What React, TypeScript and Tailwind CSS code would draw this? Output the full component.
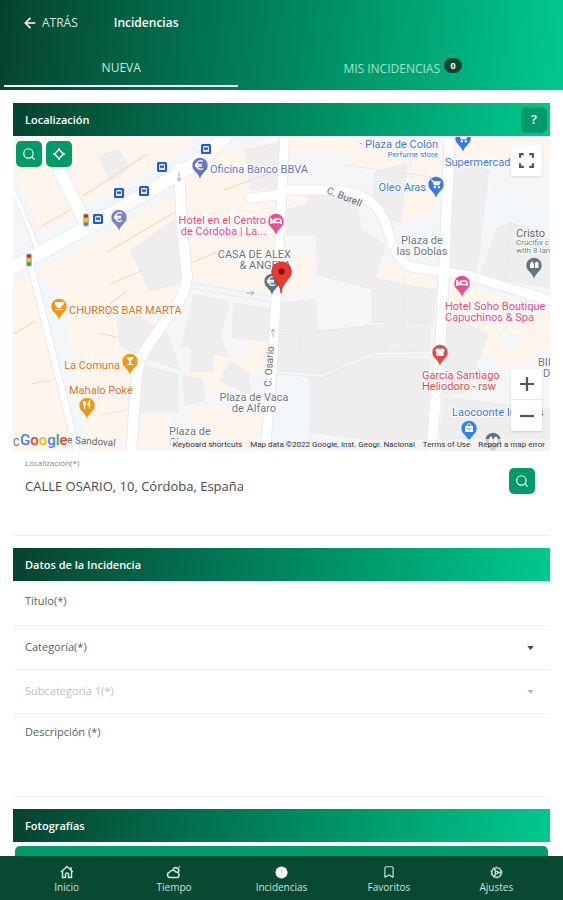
import type { ReactNode } from "react";
import { LuBookmark, LuSearch, LuArrowLeft } from "react-icons/lu";

const BAR = "bg-[linear-gradient(97deg,#06432f_0%,#00855d_50%,#00c98d_100%)]";

function SectionBar({ title, action }: { title: string; action?: ReactNode }) {
  return (
    <div className={`flex h-[33px] items-center justify-between pr-[3px] pl-3 ${BAR}`}>
      <h2 className="pt-[2px] text-[11px] font-semibold text-white">{title}</h2>
      {action}
    </div>
  );
}

function GreenButton({ label, children }: { label: string; children: ReactNode }) {
  return (
    <button
      type="button"
      aria-label={label}
      className="flex size-[26px] shrink-0 items-center justify-center rounded-[5px] bg-[#039a6a] text-white"
    >
      {children}
    </button>
  );
}

type PinKind = "cup" | "glass" | "fork" | "bed" | "cart" | "bag" | "coin" | "shirt" | "arch";

function Pin({ x, y, color, kind }: { x: number; y: number; color: string; kind: PinKind }) {
  return (
    <g transform={`translate(${x} ${y})`}>
      <path
        d="M0 14.500C-1.200 11-2.600 9-4.800 6.800A8 8 0 1 1 4.800 6.800C2.600 9 1.200 11 0 14.500Z"
        fill={color}
        stroke="#fff"
        strokeWidth="0.500"
      />
      {kind === "cup" && <path d="M-4-4H4.500V-1H3Q2.500 2 0 2T-4-2ZM-4 3H4V4H-4Z" fill="#fff" />}
      {kind === "glass" && <path d="M-4-4H4L1 0V3H3V4H-3V3H-1V0Z" fill="#fff" />}
      {kind === "fork" && (
        <path d="M-3.500-4V-1Q-3.500 0-2.500 0V4M-1.500-4V-1Q-1.500 0-2.500 0M-2.500-4V0M2.500 4V-4Q1-3 1 0H2.500" fill="none" stroke="#fff" strokeWidth="1.200" />
      )}
      {kind === "bed" && (
        <path d="M-5-3V3M-5 1.500H5V3M5 1V0Q5-2 3-2H-1V1M-4-.5H-2" fill="none" stroke="#fff" strokeWidth="1.600" />
      )}
      {kind === "cart" && (
        <path d="M-5-4H-3.500L-2 1H3L4.500-2.500H-3Z M-2 2.500H-.5V4H-2ZM2 2.500H3.500V4H2Z" fill="#fff" stroke="#fff" strokeWidth="0.700" />
      )}
      {kind === "bag" && (
        <>
          <path d="M-4-2H4V4H-4Z" fill="#fff" />
          <path d="M-2-2Q-2-4.500 0-4.500T2-2" fill="none" stroke="#fff" />
          <path d="M-2 0Q0 3 2 0" fill="none" stroke={color} strokeWidth="0.900" />
        </>
      )}
      {kind === "coin" && (
        <path d="M3-3.500A4.200 4.200 0 1 0 3 3.500M-5-.7H2M-5 1H2" fill="none" stroke="#fff" strokeWidth="1.300" />
      )}
      {kind === "shirt" && <path d="M-5-2L-2-4Q0-2 2-4L5-2L3.500 0.500V4H-3.500V0.500Z" fill="#fff" />}
      {kind === "arch" && <path d="M-4 3V-1L-2-4L0-1V3ZM1 3V-2Q3-5 4.500-2V3Z" fill="#fff" />}
    </g>
  );
}

function BusStop({ x, y }: { x: number; y: number }) {
  return (
    <g transform={`translate(${x} ${y})`}>
      <rect x="-5" y="-5" width="10" height="10" rx="1.500" fill="#2459cf" />
      <path d="M-3-2.500Q0-4 3-2.500V3H-3Z" fill="#dfe8ff" />
      <path d="M-2-1.500H2V.8H-2Z" fill="#2459cf" />
    </g>
  );
}

function TrafficLight({ x, y }: { x: number; y: number }) {
  return (
    <g transform={`translate(${x} ${y})`}>
      <rect x="-3" y="-6.500" width="6" height="13" rx="1.500" fill="#c9b7a6" />
      <rect x="-1.800" y="-5.500" width="3.600" height="3.200" fill="#c2242d" />
      <rect x="-1.800" y="-1.600" width="3.600" height="3.200" fill="#f0c02e" />
      <rect x="-1.800" y="2.400" width="3.600" height="3.200" fill="#2c9f5c" />
    </g>
  );
}

const ROADS: [string, number][] = [
  ["M5 272L90 226L180 173Q205 158 225 137L240 118", 13],
  ["M47 146L86 224", 12],
  ["M8 182Q26 215 38 252", 4],
  ["M30 262L78 455", 6],
  ["M179 168L182 230L187 275Q187 293 172 311L148 346Q137 360 136 385L131 455", 10],
  ["M285 130L280 230L276 300L272 370L265 455", 9],
  ["M250 198L278 195L285 190H330Q375 190 387 227Q396 262 412 267L470 276L556 302", 9],
  ["M450 130L444 270L440 350L431 455", 10],
];

const LANES: [string, number][] = [
  ["M274 372L322 376L372 354L438 353", 3],
  ["M188 285L276 300", 5],
];

const BEIGE = [
  "M13 137H200L180 152L83 208L50 150L13 160Z",
  "M13 160L50 160L80 210L42 232L13 172Z",
  "M13 285L178 192L186 285L140 350L131 451H80Z",
  "M13 275L32 268L74 451H13Z",
  "M222 152L280 137L276 295L190 280L184 176Z",
  "M289 137H350V152L289 156ZM289 193H308V208H289ZM286 262L313 251V284L283 296Z",
  "M374 175L440 158L437 216L408 224L375 200Z",
  "M345 137H442V158L374 172L345 165ZM452 137H551V157H490V198L470 192Z",
  "M449 282L551 310V345L510 370L450 330Z",
  "M378 258L436 275L432 290L376 276Z",
  "M190 345L267 340V373H250L246 392L190 386ZM185 405L262 412L256 451H195Z",
  "M135 417L170 415V448H133Z",
];

const GRAY = [
  "M99 157L118 148L129 168L110 182Z",
  "M130 250L176 219L181 283L150 291Z",
  "M116 311L140 317L168 335L180 370L150 360L120 346Z",
  "M141 365L178 374V412H137Z",
  "M194 294L230 302L220 335L228 357L182 346Z",
  "M234 303L271 309L268 341L232 338Z",
  "M191 347L213 351V372H191ZM231 362L249 373L250 395L219 381Z",
  "M183 376L202 378L205 400L185 406Z",
  "M287 209L313 204V235H287ZM308 192H353L362 230L385 245L372 289L318 275L316 235L308 220Z",
  "M281 303L315 299L318 332L370 325L430 322V350L370 353L322 373L278 370Z",
  "M309 376L372 358L430 358L426 448L309 432Z",
  "M372 278L436 290L433 322H372Z",
  "M374 172L407 163L401 223L385 218L373 196Z",
  "M452 158L489 170L480 245L475 273L449 267Z",
  "M497 228L511 222L551 240V288L480 276Z",
  "M448 315L488 335L466 392L443 395ZM444 397L551 410V451H439Z",
  "M245 150L281 142L280 188L250 190Z",
];

const BLUE = [
  "M13 252L90 208L205 137H235L190 175L13 285Z",
  "M28 268L60 290L88 451H76Z",
  "M232 342L248 346L246 358L230 357ZM270 376H308V451H266Z",
  "M319 208L340 225L350 222L352 245H320Z",
  "M389 222L438 216L436 264L405 255Z",
  "M485 195L551 205V235L500 222L480 240Z",
  "M468 352L492 366L484 402L452 394ZM388 375H411V392H388ZM380 416L418 419L416 446H380Z",
  "M502 332L522 338L518 347L500 344Z",
];

const BLOCK_LINES =
  "M83 196L147 154M40 227L70 210M107 252L177 211M110 284L143 270M13 334L36 321M31 384L51 380M110 304L127 291M98 333L117 337M224 190L276 171M193 262L217 252";
const WALL_LINES =
  "M281 335L370 326M302 300L300 372M323 332V372M386 320V350M404 275L402 350M372 322H433M511 222L505 280M470 340V392M100 415L127 410M410 140V170M345 165L440 178";

function Label({ x, y, fill, anchor = "start", size = 11, lines }: {
  x: number;
  y: number;
  fill: string;
  anchor?: "start" | "middle" | "end";
  size?: number;
  lines: string[];
}) {
  return (
    <text textAnchor={anchor} fontSize={size} fill={fill} stroke="#fff" strokeWidth="2" paintOrder="stroke" strokeLinejoin="round">
      {lines.map((line, i) => (
        <tspan key={line} x={x} y={y + i * 11}>{line}</tspan>
      ))}
    </text>
  );
}

function StreetMap() {
  return (
    <svg
      role="img"
      aria-label="Mapa"
      viewBox="13 137 537 314"
      preserveAspectRatio="xMidYMid slice"
      className="block h-full w-full font-[Roboto,sans-serif]"
    >
      <rect x="-400" y="137" width="1400" height="314" fill="#f5f6f7" />
      {BEIGE.map((d) => <path key={d} d={d} fill="#fef5ec" />)}
      {BLUE.map((d) => <path key={d} d={d} fill="#f4f7fa" />)}
      {GRAY.map((d) => <path key={d} d={d} fill="#eeeeee" stroke="#e8e9ea" strokeWidth="0.600" />)}
      <path d={WALL_LINES} stroke="#e5e6e7" strokeWidth="0.800" fill="none" />
      <path d={BLOCK_LINES} stroke="#f1dcc3" strokeWidth="1.200" fill="none" />
      {LANES.map(([d, w]) => <path key={d} d={d} fill="none" stroke="#dfe2e5" strokeWidth={w + 1} />)}
      {LANES.map(([d, w]) => <path key={d} d={d} fill="none" stroke="#f3f5f7" strokeWidth={w} />)}
      {ROADS.map(([d, w]) => <path key={d} d={d} fill="none" stroke="#e8eaec" strokeWidth={w + 2} strokeLinejoin="round" strokeLinecap="round" />)}
      {ROADS.map(([d, w]) => <path key={d} d={d} fill="none" stroke="#fff" strokeWidth={w} strokeLinejoin="round" strokeLinecap="round" />)}
      <path d="M179 172V181M177 178L179 181L181 178M273 337V329M271 332L273 329L275 332M246 293H254M251 291L254 293L251 295" stroke="#a9adb2" fill="none" />

      <BusStop x={206} y={149} />
      <BusStop x={162} y={167} />
      <BusStop x={144} y={191} />
      <BusStop x={119} y={193} />
      <BusStop x={98} y={219} />
      <TrafficLight x={86} y={220} />
      <TrafficLight x={29} y={260} />

      <Label x={210} y={173} fill="#6674c4" lines={["Oficina Banco BBVA"]} />
      <Label x={266} y={224} fill="#e84a83" anchor="end" lines={["Hotel en el Centro", "de Córdoba | La..."]} />
      <Label x={291} y={258} fill="#66757f" anchor="end" lines={["CASA DE ALEX", "& ANGELA"]} />
      <Label x={438} y={148} fill="#3b78e7" anchor="end" lines={["· Plaza de Colón"]} />
      <Label x={438} y={157} fill="#3b78e7" anchor="end" size={8} lines={["Perfume store"]} />
      <Label x={445} y={166} fill="#3b78e7" lines={["Supermercad"]} />
      <Label x={426} y={191} fill="#3b78e7" anchor="end" lines={["Oleo Aras"]} />
      <Label x={422} y={244} fill="#70777e" anchor="middle" lines={["Plaza de", "las Doblas"]} />
      <Label x={516} y={237} fill="#5b646b" lines={["Cristo"]} />
      <Label x={516} y={245} fill="#70777e" size={8} lines={["Crucifix c"]} />
      <Label x={516} y={253} fill="#70777e" size={8} lines={["with 8 lan"]} />
      <Label x={69} y={314} fill="#d9712b" lines={["CHURROS BAR MARTA"]} />
      <Label x={120} y={369} fill="#d9712b" anchor="end" lines={["La Comuna"]} />
      <Label x={69} y={394} fill="#d9712b" lines={["Mahalo Poké"]} />
      <Label x={445} y={310} fill="#e84a83" lines={["Hotel Soho Boutique", "Capuchinos & Spa"]} />
      <Label x={422} y={379} fill="#df4b46" lines={["García Santiago", "Heliodoro - rsw"]} />
      <Label x={452} y={416} fill="#3b78e7" lines={["Laocoonte Interios"]} />
      <Label x={254} y={401} fill="#70777e" anchor="middle" lines={["Plaza de Vaca", "de Alfaro"]} />
      <Label x={169} y={435} fill="#70777e" lines={["Plaza de", "Cl"]} />
      <Label x={538} y={366} fill="#70777e" lines={["BII"]} />
      <Label x={543} y={377} fill="#70777e" lines={["D"]} />
      <g fontSize="10" fill="#666b70">
        <text transform="translate(271 387) rotate(-86)">C. Osario</text>
        <text transform="translate(326 193) rotate(22)">C. Burell</text>
        <text x="13" y="446">C</text>
        <text transform="translate(67 443) rotate(4)">e Sandoval</text>
      </g>

      <Pin x={200} y={165} color="#6674c4" kind="coin" />
      <Pin x={119} y={217} color="#7b83c4" kind="coin" />
      <Pin x={276} y={221} color="#ee4d8b" kind="bed" />
      <Pin x={463} y={138} color="#3b78e7" kind="cart" />
      <Pin x={436} y={184} color="#3b78e7" kind="cart" />
      <Pin x={534} y={265} color="#62757f" kind="arch" />
      <Pin x={59} y={306} color="#ef9816" kind="cup" />
      <Pin x={130} y={361} color="#ef9816" kind="glass" />
      <Pin x={87} y={405} color="#ef9816" kind="fork" />
      <Pin x={462} y={283} color="#ee4d8b" kind="bed" />
      <Pin x={440} y={352} color="#e24b44" kind="shirt" />
      <Pin x={469} y={428} color="#2f80ed" kind="bag" />
      <Pin x={493} y={440} color="#62757f" kind="arch" />
      <Pin x={272} y={281} color="#62757f" kind="coin" />
      <path
        d="M281 293C280 285 277 282 274 278A9.800 9.800 0 1 1 289 278C286 282 282 285 281 293Z"
        fill="#ea3a30"
        stroke="#b92a22"
        strokeWidth="0.800"
      />
      <circle cx="281.500" cy="271.500" r="3.200" fill="#7d1512" />
    </svg>
  );
}

function MapPanel() {
  return (
    <div className="relative mt-px h-[314px] overflow-hidden">
      <StreetMap />
      <div className="absolute top-1 left-[3px] flex gap-1">
        <GreenButton label="Buscar">
          <LuSearch className="size-[14px]" />
        </GreenButton>
        <GreenButton label="Mi ubicación">
          <svg viewBox="0 0 16 16" className="size-4" fill="none" stroke="currentColor" strokeWidth="1.500" strokeLinejoin="round">
            <path d="M8 3.500L12.500 8L8 12.500L3.500 8ZM8 2V4M8 12V14M2 8H4M12 8H14" />
          </svg>
        </GreenButton>
      </div>
      <button
        type="button"
        aria-label="Pantalla completa"
        className="absolute top-2 right-2 flex size-[31px] items-center justify-center rounded-[2px] bg-white text-[#555] shadow"
      >
        <svg viewBox="0 0 14 14" className="size-[15px]" fill="none" stroke="currentColor" strokeWidth="2">
          <path d="M1 4.500V1H4.500M9.500 1H13V4.500M13 9.500V13H9.500M4.500 13H1V9.500" />
        </svg>
      </button>
      <div className="absolute right-2 bottom-5 flex w-[31px] flex-col divide-y divide-[#e6e6e6] rounded-[2px] bg-white text-[#555] shadow">
        <button type="button" aria-label="Acercar" className="flex h-[31px] items-center justify-center">
          <svg viewBox="0 0 14 14" className="size-[14px]" stroke="currentColor" strokeWidth="2.200">
            <path d="M0 7H14M7 0V14" />
          </svg>
        </button>
        <button type="button" aria-label="Alejar" className="flex h-[31px] items-center justify-center">
          <svg viewBox="0 0 14 14" className="size-[14px]" stroke="currentColor" strokeWidth="2.200">
            <path d="M0 7H14" />
          </svg>
        </button>
      </div>
      <div className="absolute bottom-0 left-[7px] font-[Roboto,sans-serif] text-[15px] leading-[22px] font-medium">
        <span className="text-[#4285f4]">G</span>
        <span className="text-[#ea4335]">o</span>
        <span className="text-[#fbbc05]">o</span>
        <span className="text-[#4285f4]">g</span>
        <span className="text-[#34a853]">l</span>
        <span className="text-[#ea4335]">e</span>
      </div>
      <div className="absolute right-0 bottom-0 flex h-3 items-center gap-2 bg-[#f5f5f5]/70 px-[5px] font-[Roboto,sans-serif] text-[8px] leading-3 whitespace-nowrap text-[#333]">
        <button type="button">Keyboard shortcuts</button>
        <span>Map data ©2022 Google, Inst. Geogr. Nacional</span>
        <a href="#terminos">Terms of Use</a>
        <a href="#error">Report a map error</a>
      </div>
    </div>
  );
}

function SelectRow({ id, label, disabled = false }: { id: string; label: string; disabled?: boolean }) {
  return (
    <div className={`flex h-11 items-center border-b border-[#f1f1f1] px-3 ${disabled ? "text-[#bcc3c1]" : "text-[#50655f]"}`}>
      <label htmlFor={id} className="text-[11px]">{label}</label>
      <select id={id} disabled={disabled} className="h-6 flex-1 appearance-none bg-transparent outline-none" />
      <svg viewBox="0 0 8 5" className={`mr-1 h-1 w-[7px] ${disabled ? "text-[#b9b9b9]" : "text-[#444]"}`} fill="currentColor">
        <path d="M0 0H8L4 5Z" />
      </svg>
    </div>
  );
}

function NavItem({ label, active = false, children }: { label: string; active?: boolean; children: ReactNode }) {
  return (
    <a
      href={`#${label.toLowerCase()}`}
      aria-current={active ? "page" : undefined}
      className="flex flex-1 flex-col items-center gap-[2px] pt-[9px] text-[#d3e2dc]"
    >
      <span className="flex h-[14px] items-center">{children}</span>
      <span className="text-[10px] leading-3">{label}</span>
    </a>
  );
}

export default function App() {
  return (
    <div className="flex h-screen flex-col bg-white font-['Open_Sans',sans-serif]">
      <header className={`h-[90px] shrink-0 text-white ${BAR}`}>
        <div className="flex h-[46px] items-center gap-9 px-[22px]">
          <button type="button" className="flex items-center gap-1 text-xs text-[#d5e6df]">
            <LuArrowLeft className="size-4 text-white" strokeWidth={2.5} />
            ATRÁS
          </button>
          <h1 className="text-xs font-semibold">Incidencias</h1>
        </div>
        <div role="tablist" className="flex h-[41px] gap-2 px-1 text-xs">
          <button type="button" role="tab" aria-selected="true" className="flex-[3] border-b-2 border-white pt-2 pb-1 text-[#d5e8df]">
            NUEVA
          </button>
          <button type="button" role="tab" aria-selected="false" className="flex flex-[4] items-center justify-center gap-1 pt-1 text-[#a5e2cb]">
            MIS INCIDENCIAS
            <span className="mb-[6px] flex h-[15px] w-[18px] items-center justify-center rounded-full bg-[#0b4733] text-[9px] font-bold text-white">0</span>
          </button>
        </div>
      </header>

      <main className="min-h-0 flex-1 overflow-y-auto px-[13px] pt-[13px] [scrollbar-width:none]">
        <section>
          <SectionBar title="Localización" action={<GreenButton label="Ayuda"><span className="text-[13px] font-semibold">?</span></GreenButton>} />
          <MapPanel />
          <div className="flex h-[85px] items-start border-b border-[#f1f1f1] px-3">
            <div className="flex flex-1 flex-col pt-[7px]">
              <label htmlFor="loc" className="text-[8px] leading-[10px] text-[#7b8985]">Localización(*)</label>
              <input id="loc" defaultValue="CALLE OSARIO, 10, Córdoba, España" className="mt-2 h-5 w-full text-[13px] text-[#4a4a4a] outline-none" />
            </div>
            <div className="pt-[17px] pr-[3px]">
              <GreenButton label="Buscar dirección">
                <LuSearch className="size-[14px]" />
              </GreenButton>
            </div>
          </div>
        </section>

        <section className="mt-3">
          <SectionBar title="Datos de la Incidencia" />
          <div className="flex h-[45px] items-center border-b border-[#f1f1f1] px-3 pb-1 text-[11px] text-[#50655f]">
            <label htmlFor="titulo">Título(*)</label>
            <input id="titulo" className="h-6 flex-1 outline-none" />
          </div>
          <SelectRow id="categoria" label="Categoría(*)" />
          <SelectRow id="subcategoria" label="Subcategoría 1(*)" disabled />
          <div className="flex h-[83px] items-start border-b border-[#f1f1f1] px-3 pt-[10px] text-[11px] text-[#50655f]">
            <label htmlFor="descripcion">Descripción (*)</label>
            <textarea id="descripcion" className="h-14 flex-1 resize-none outline-none" />
          </div>
        </section>

        <section className="mt-3">
          <SectionBar title="Fotografías" />
          <button type="button" aria-label="Añadir fotografía" className="mx-[2px] mt-1 block h-9 w-[calc(100%-4px)] rounded-[5px] bg-[#039a6a]" />
        </section>
      </main>

      <nav className="flex h-11 shrink-0 bg-[#074931] px-[13px]">
        <NavItem label="Inicio">
          <svg viewBox="0 0 14 14" className="size-[14px]" fill="none" stroke="currentColor" strokeWidth="1.500">
            <path d="M1 7L7 1.500L13 7M2.500 6V12.500H5.500V9Q5.500 8 7 8T8.500 9V12.500H11.500V6M11 5V2" />
          </svg>
        </NavItem>
        <NavItem label="Tiempo">
          <svg viewBox="0 0 16 14" className="h-[14px] w-4" fill="none" stroke="currentColor" strokeWidth="1.500">
            <path d="M4 12.500A2.700 2.700 0 0 1 3.500 7.200A3.700 3.700 0 0 1 10 7Q13 7 13 10T10.500 12.500ZM7 4.500A3 3 0 1 1 12.500 7M12.500 2.500L14 1.500" />
          </svg>
        </NavItem>
        <NavItem label="Incidencias" active>
          <svg viewBox="0 0 14 14" className="size-[13px]">
            <circle cx="7" cy="7" r="6.500" fill="#fff" />
            <path d="M7 4V7.500M7 8.500V10" stroke="#b9cdc4" strokeWidth="1.300" />
          </svg>
        </NavItem>
        <NavItem label="Favoritos">
          <LuBookmark className="size-[14px]" />
        </NavItem>
        <NavItem label="Ajustes">
          <svg viewBox="0 0 14 14" className="size-[13px]" fill="none" stroke="currentColor" strokeWidth="1.500">
            <circle cx="7" cy="7" r="5" />
            <circle cx="7" cy="7" r="1.500" />
            <path d="M8.500 7H12M6 5.500L4.500 2.500M6 8.500L4.500 11.500" />
            <circle cx="7" cy="7" r="6" strokeWidth="1" strokeDasharray="2 1.800" />
          </svg>
        </NavItem>
      </nav>
    </div>
  );
}
